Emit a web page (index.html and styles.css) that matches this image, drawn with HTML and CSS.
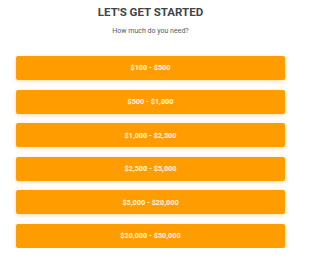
FILE: index.html
```html
<!DOCTYPE html>
<html>
<head>
<meta charset="utf-8">
<link rel="stylesheet" href="styles.css">
</head>
<body>
<div class="page">
  <h1 class="title">LET'S GET STARTED</h1>
  <p class="subtitle">How much do you need?</p>
  <div class="options">
    <button class="option">$100 - $500</button>
    <button class="option">$500 - $1,000</button>
    <button class="option">$1,000 - $2,500</button>
    <button class="option">$2,500 - $5,000</button>
    <button class="option">$5,000 - $20,000</button>
    <button class="option">$20,000 - $50,000</button>
  </div>
</div>
</body>
</html>
```
FILE: styles.css
```css
html, body {
  margin: 0;
  padding: 0;
  background: #ffffff;
}
.page {
  box-sizing: border-box;
  width: 300px;
  font-family: Roboto, "Liberation Sans", sans-serif;
  padding: 4.6px 15px 0 16px;
  display: flex;
  flex-direction: column;
}
.title {
  margin: 0;
  font-size: 11.5px;
  line-height: 14px;
  font-weight: 700;
  color: #3e4548;
  text-align: center;
}
.subtitle {
  margin: 7px 0 0;
  font-size: 7px;
  line-height: 10px;
  color: #555b5e;
  text-align: center;
}
.options {
  margin-top: 20.4px;
  display: flex;
  flex-direction: column;
  gap: 9.6px;
}
.option {
  height: 24px;
  border: none;
  border-radius: 2px;
  background: #ff9c00;
  color: #fff6e0;
  font-family: Roboto, "Liberation Sans", sans-serif;
  font-size: 7.3px;
  font-weight: 700;
  box-shadow: 0 1px 4px rgba(255, 156, 0, 0.35);
  padding: 0;
}
```
